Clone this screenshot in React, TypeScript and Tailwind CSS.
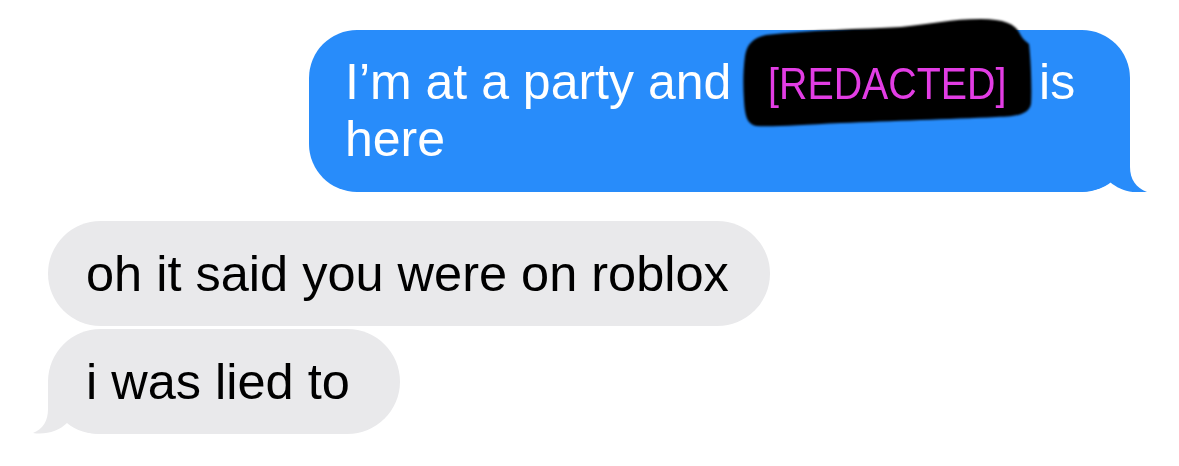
import React from "react";

function BlueTail() {
  return (
    <svg
      className="absolute bottom-0 right-[-17px] w-[77px] h-[53px]"
      viewBox="0 0 77 53"
      aria-hidden="true"
    >
      <path
        d="M60,0 L60,28 C60,40 66,49 77,53 C63,55 49,51 40,43 C32,50 20,53 5,53 L5,0 Z"
        fill="#288cfa"
      />
    </svg>
  );
}

function GreyTail() {
  return (
    <svg
      className="absolute bottom-0 left-[-15px] w-[75px] h-[53px]"
      viewBox="0 0 75 53"
      aria-hidden="true"
    >
      <path
        d="M15,0 L15,28 C15,40 10,48 0,52 C13,54 26,50 34,42 C43,50 55,53 70,53 L70,0 Z"
        fill="#e9e9eb"
      />
    </svg>
  );
}

function Redacted() {
  return (
    <span className="relative inline-block w-[280px] pl-[23px] text-[45px] leading-[40px] text-[#e23de4]">
      <svg
        className="absolute left-[-4px] top-[-48px] w-[292px] h-[112px] blur-[0.8px]"
        viewBox="0 0 292 112"
        aria-hidden="true"
      >
        <path
          d="M25,19 C70,14 120,13 160,11 C190,8 210,3 240,3 C262,3 275,8 279,18 C282,24 286,26 288,28 C290,45 291,75 290,88 C288,98 276,101 255,101 C210,103 150,105 100,107 C60,109 30,111 15,110 C6,108 4,100 3,85 C2,70 2,55 4,40 C6,28 12,22 25,19 Z"
          fill="#000000"
        />
      </svg>
      <span className="relative inline-block origin-left scale-x-[0.875]">[REDACTED]</span>
    </span>
  );
}

export default function App() {
  return (
    <div
      className="w-[1179px] h-[466px] bg-white overflow-hidden flex flex-col pt-[30px] pl-[48px] pr-[49px]"
      style={{ fontFamily: '"Liberation Sans", Arial, sans-serif' }}
    >
      <div className="flex justify-end">
        <div className="relative w-[821px] rounded-[48px] bg-[#288cfa] pl-[36px] pr-[36px] py-[24px] text-[50px] leading-[57px] text-white">
          <BlueTail />
          <p className="relative">
            I’m at a party and <Redacted /> is here
          </p>
        </div>
      </div>
      <div className="mt-[29px] flex flex-col items-start gap-[3px]">
        <div className="rounded-[53px] bg-[#e9e9eb] pl-[38px] pr-[41px] py-[24px] text-[50.5px] leading-[57px] text-black">
          oh it said you were on roblox
        </div>
        <div className="relative rounded-[53px] bg-[#e9e9eb] pl-[38px] pr-[50px] py-[24px] text-[50.5px] leading-[57px] text-black">
          <GreyTail />
          <span className="relative">i was lied to</span>
        </div>
      </div>
    </div>
  );
}
